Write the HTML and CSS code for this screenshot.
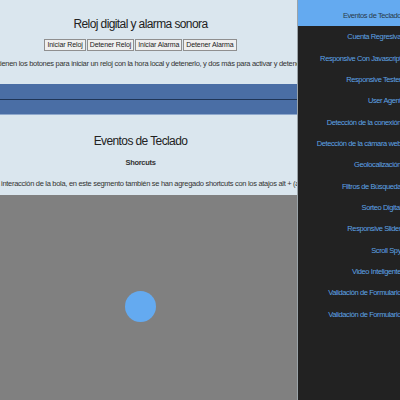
FILE: index.html
```html
<!DOCTYPE html>
<html lang="es">
<head>
<meta charset="utf-8">
<title>Eventos de Teclado</title>
<link rel="stylesheet" href="styles.css">
</head>
<body>
<div class="page">
  <main class="content">
    <section class="sec sec-clock">
      <h2 class="title">Reloj digital y alarma sonora</h2>
      <div class="buttons">
        <button class="btn">Iniciar Reloj</button>
        <button class="btn">Detener Reloj</button>
        <button class="btn">Iniciar Alarma</button>
        <button class="btn">Detener Alarma</button>
      </div>
      <div class="line"><p class="text text-clock">En esta sección se tienen los botones para iniciar un reloj con la hora local y detenerlo, y dos más para activar y detener una alarma.</p></div>
    </section>
    <div class="band">
      <div class="band-top"></div>
      <div class="band-bottom"></div>
    </div>
    <section class="sec sec-keys">
      <h2 class="title">Eventos de Teclado</h2>
      <h3 class="subtitle">Shorcuts</h3>
      <div class="line"><p class="text text-keys">Además de la interacción de la bola, en este segmento también se han agregado shortcuts con los atajos alt + (a)</p></div>
    </section>
    <section class="stage">
      <div class="ball"></div>
    </section>
  </main>
  <nav class="menu">
    <a class="item active">Eventos de Teclado</a>
    <a class="item">Cuenta Regresiva</a>
    <a class="item">Responsive Con Javascript</a>
    <a class="item">Responsive Tester</a>
    <a class="item">User Agent</a>
    <a class="item">Detección de la conexión</a>
    <a class="item">Detección de la cámara web</a>
    <a class="item">Geolocalización</a>
    <a class="item">Filtros de Búsqueda</a>
    <a class="item">Sorteo Digital</a>
    <a class="item">Responsive Slider</a>
    <a class="item">Scroll Spy</a>
    <a class="item">Video Inteligente</a>
    <a class="item">Validación de Formulario</a>
    <a class="item">Validación de Formulario</a>
  </nav>
</div>
</body>
</html>
```
FILE: styles.css
```css
html, body {
  margin: 0;
  padding: 0;
  width: 400px;
  height: 400px;
  overflow: hidden;
}
body {
  font-family: "Liberation Sans", Arial, sans-serif;
  color: #222;
}
.page {
  display: flex;
  height: 400px;
}
.content {
  width: 297px;
  flex: none;
  display: flex;
  flex-direction: column;
  border-right: 1px solid #9aa3a8;
}
.sec {
  background: #dae6ee;
  padding-right: 16px;
  display: flex;
  flex-direction: column;
  align-items: center;
  overflow: hidden;
}
.sec-clock {
  height: 84px;
  padding-top: 16px;
  box-sizing: border-box;
}
.title {
  margin: 0;
  font-weight: normal;
  font-size: 12px;
  letter-spacing: -0.6px;
  line-height: 16px;
}
.buttons {
  display: flex;
  gap: 1px;
  margin-top: 7px;
}
.btn {
  font-family: "Liberation Sans", Arial, sans-serif;
  font-size: 7px;
  letter-spacing: -0.1px;
  line-height: 8px;
  padding: 1px 2px;
  margin: 0;
  background: #efefef;
  border: 1px solid #8f8f8f;
  color: #222;
}
.line {
  width: 281px;
  display: flex;
  justify-content: flex-start;
}
.text {
  margin: 0;
  white-space: nowrap;
  font-size: 7.5px;
  letter-spacing: -0.3px;
  line-height: 10px;
  color: #333;
  flex: none;
}
.text-clock {
  margin-top: 8px;
  margin-left: -61px;
}
.band {
  height: 31px;
  display: flex;
  flex-direction: column;
  background: #4a6ea5;
}
.band-top {
  height: 15px;
  border-bottom: 1px solid #1f3557;
}
.band-bottom {
  flex: 1;
  border-bottom: 1px solid #8ea8cc;
}
.sec-keys {
  height: 80px;
  padding-top: 18px;
  box-sizing: border-box;
}
.subtitle {
  margin: 9px 0 0;
  font-size: 7.5px;
  letter-spacing: -0.3px;
  line-height: 10px;
  font-weight: bold;
  color: #333;
}
.text-keys {
  margin-top: 11px;
  margin-left: -43px;
}
.stage {
  flex: 1;
  background: #808080;
  display: flex;
  justify-content: center;
  padding-right: 16px;
  padding-top: 96px;
}
.ball {
  width: 31px;
  height: 31px;
  border-radius: 50%;
  background: #64aaf0;
}
.menu {
  width: 102px;
  flex: none;
  background: #222;
  display: flex;
  flex-direction: column;
  overflow: hidden;
}
.item {
  display: block;
  text-align: right;
  white-space: nowrap;
  font-size: 7.5px;
  letter-spacing: -0.4px;
  line-height: 11px;
  padding: 5px 0 5.33px;
  color: #5ea3e6;
  margin-right: -1px;
}
.item.active {
  background: #64aaf0;
  color: #2a3a4a;
  padding-top: 10px;
}
```
